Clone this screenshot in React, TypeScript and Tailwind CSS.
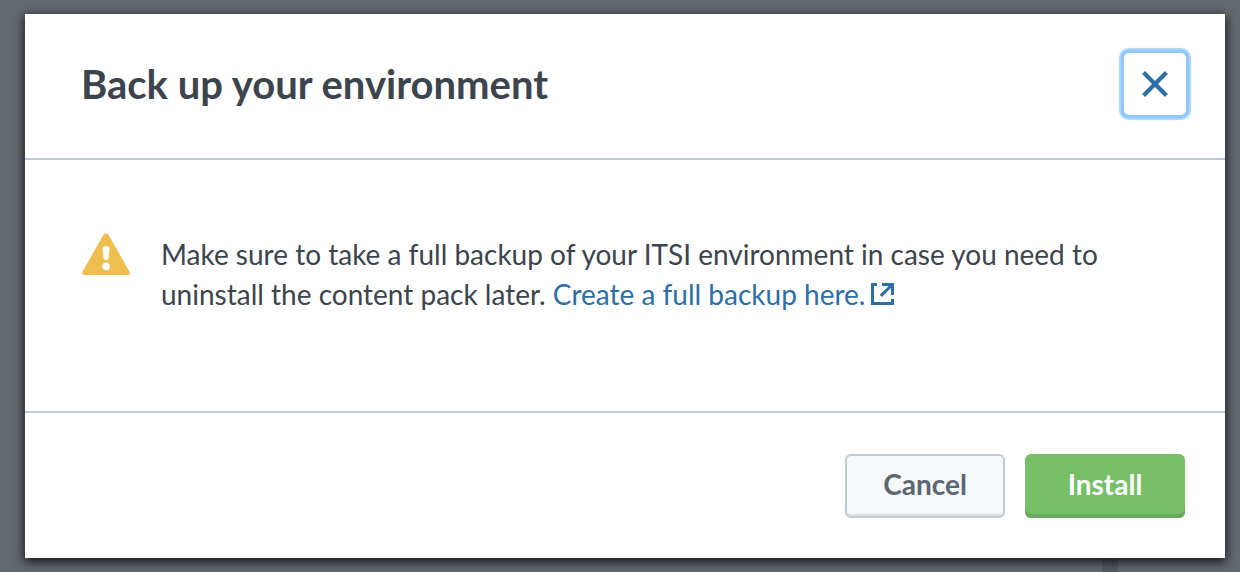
import React from "react";

function CloseIcon() {
  return (
    <svg viewBox="0 0 26 26" className="size-[26px]" aria-hidden="true">
      <path d="M1.6 1.6 24.4 24.4M24.4 1.6 1.6 24.4" stroke="#2c6ea6" strokeWidth="4.2" fill="none" />
    </svg>
  );
}

function WarningIcon() {
  return (
    <svg viewBox="0 0 48 42" className="h-[42px] w-12 shrink-0" role="img" aria-label="Warning">
      <path
        d="M21.6 1.6C22.5 0 25.5 0 26.4 1.6L47.4 38.4C48.4 40.2 47.6 42 45.6 42H2.4C.4 42-.4 40.2.6 38.4Z"
        fill="#efbe50"
      />
      <path
        d="M20.5 15.6C20.4 12.2 27.6 12.2 27.5 15.6L26.4 25.4C26.2 27.6 21.8 27.6 21.6 25.4Z"
        fill="#fff"
      />
      <circle cx="24" cy="33.4" r="3.8" fill="#fff" />
    </svg>
  );
}

function ExternalIcon() {
  return (
    <svg viewBox="0 0 24 22" className="ml-1.5 inline-block h-[22px] w-6 align-baseline" aria-hidden="true">
      <path d="M6 1.5H1.5V20.5H21.5V16" stroke="#2c6ea6" strokeWidth="3" fill="none" />
      <path d="M11 0H23V12H20V5.1L10.9 13.9 8.7 11.7 17.8 3H11Z" fill="#2c6ea6" />
    </svg>
  );
}

export default function App() {
  return (
    <div className="relative min-h-screen bg-[#646970] pt-3.5 pr-[15px] pb-3.5 pl-[25px] font-['Lato',sans-serif]">
      <div className="absolute right-[122px] bottom-0 h-3.5 w-4 bg-[#555a63]" />
      <div
        role="dialog"
        aria-modal="true"
        aria-labelledby="dialog-title"
        className="relative bg-white text-[#3c444d] shadow-[0_3px_10px_1px_rgba(0,0,0,0.8)]"
      >
        <header className="flex items-start justify-between border-b-2 border-[#c3c9d5] pt-9 pr-9 pb-10 pl-14">
          <h1 id="dialog-title" className="pt-2 text-[40px] leading-[52px] font-bold">
            Back up your environment
          </h1>
          <button
            type="button"
            aria-label="Close"
            className="flex size-[68px] items-center justify-center rounded-lg border-3 border-[#90c8fa] bg-white shadow-[0_0_1px_2px_#a9d5fc]"
          >
            <CloseIcon />
          </button>
        </header>

        <main className="flex items-start gap-[31px] pt-[73px] pr-14 pb-[97px] pl-[57px]">
          <WarningIcon />
          <p className="max-w-[960px] pt-px text-[28px] leading-10">
            Make sure to take a full backup of your ITSI environment in case you need to uninstall the content pack
            later.{" "}
            <a href="#backup" className="text-[#2c6ea6]">
              Create a full backup here.
              <ExternalIcon />
            </a>
          </p>
        </main>

        <footer className="flex justify-end gap-5 border-t-2 border-[#c3c9d5] px-10 pt-[41px] pb-10">
          <button
            type="button"
            className="h-16 w-40 rounded-md border-2 border-[#c3c9d5] bg-[#f7f8fa] pb-1 text-[28px] font-bold text-[#5c6773] shadow-[inset_0_-2px_0_#dce0e2]"
          >
            Cancel
          </button>
          <button
            type="button"
            className="h-16 w-40 rounded-md bg-[#76be68] pb-1 text-[28px] font-bold text-white shadow-[inset_0_-4px_0_#69a95d]"
          >
            Install
          </button>
        </footer>
      </div>
    </div>
  );
}
